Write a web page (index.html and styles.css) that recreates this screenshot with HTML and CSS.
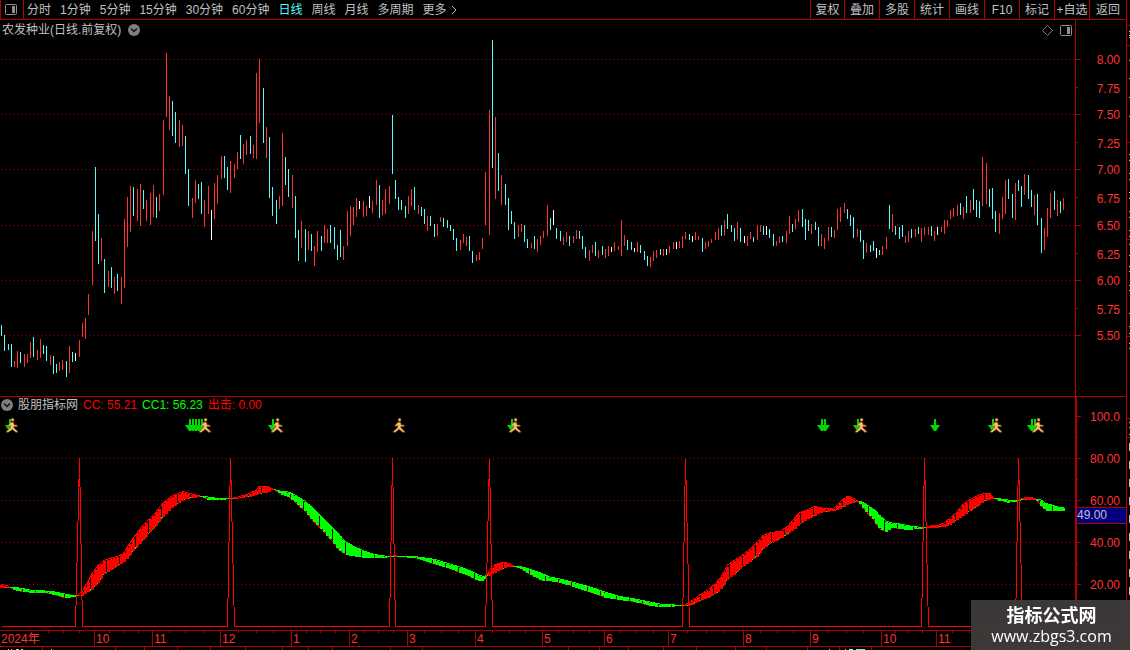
FILE: index.html
```html
<!DOCTYPE html>
<html lang="zh-CN">
    <head>
        <meta charset="UTF-8">
        <meta name="viewport" content="width=device-width, initial-scale=1.0">
        <title>农发种业 日线</title>
        <link rel="stylesheet" href="styles.css">
    </head>
    <body>

    <svg class="symbols" width="0" height="0">
        <symbol id="chevron" viewBox="0 0 12 12">
            <circle cx="6" cy="6" r="6" fill="#808080"/>
            <path d="M3 4.5L6 7.5L9 4.5" fill="none" stroke="#111" stroke-width="1.5"/>
        </symbol>
        <symbol id="layout" viewBox="0 0 12 11">
            <rect x="0.5" y="0.5" width="11" height="10" rx="1" fill="none" stroke="#909090"/>
            <rect x="7" y="2" width="3" height="7" fill="#909090"/>
        </symbol>
        <symbol id="runner" viewBox="-1 -1 14 17">
            <g fill="#ffc46a" stroke="#8a4a18" stroke-width="0.6">
                <path d="M5 4.2H7.6L8 6.8L11.2 7.2V8.4L7.8 8.4L8 10L11.6 13.2V14.2H9.8L6.2 11.2L2.4 14.2H0.4V13.2L4.4 10L4.8 7.4L3 8.4L1.8 7.8Z"/>
                <circle cx="6.6" cy="1.8" r="1.5"/>
            </g>
        </symbol>
        <symbol id="arrow" viewBox="0 0 10 12">
            <path d="M4 0H6V6H10L6 12H4L0 6H4Z" fill="#00d800"/>
        </symbol>
    </svg>

    <div class="terminal">
        <main class="workspace">
            <header class="toolbar">
                <button class="layout-button" aria-label="布局"><svg width="12" height="11"><use href="#layout"/></svg></button>
                <nav class="periods">
                    <button>分时</button>
                    <button>1分钟</button>
                    <button>5分钟</button>
                    <button>15分钟</button>
                    <button>30分钟</button>
                    <button>60分钟</button>
                    <button class="current">日线</button>
                    <button>周线</button>
                    <button>月线</button>
                    <button>多周期</button>
                    <button class="more">更多<svg width="6" height="10"><path d="M1 1L5 5L1 9" fill="none" stroke="#c0c0c0"/></svg></button>
                </nav>
                <div class="tools">
                    <button>复权</button>
                    <button>叠加</button>
                    <button>多股</button>
                    <button>统计</button>
                    <button>画线</button>
                    <button>F10</button>
                    <button>标记</button>
                    <button>+自选</button>
                    <button>返回</button>
                </div>
            </header>

            <section class="panel price-panel">
                <div class="plot">
                    <div class="price-title">
                        <h1>农发种业(日线.前复权)</h1>
                        <button aria-label="展开"><svg width="12" height="12"><use href="#chevron"/></svg></button>
                        <div class="corner">
                            <svg width="11" height="11"><path d="M5.5 0.5L10.5 5.5L5.5 10.5L0.5 5.5Z" fill="none" stroke="#808080"/></svg>
                            <svg width="12" height="11"><use href="#layout"/></svg>
                        </div>
                    </div>
                    <svg id="price-chart" class="chart" viewBox="0 40 1075 356" preserveAspectRatio="none"></svg>
                </div>
                <svg id="price-axis" class="axis" viewBox="1075 20 51 376"></svg>
            </section>

            <section class="panel indicator-panel">
                <div class="plot">
                    <div class="indicator-title">
                        <button aria-label="展开"><svg width="12" height="12"><use href="#chevron"/></svg></button>
                        <h2>股朋指标网</h2>
                        <span class="red">CC: 55.21</span>
                        <span class="green">CC1: 56.23</span>
                        <span class="red">出击: 0.00</span>
                    </div>
                    <svg id="indicator-chart" class="chart" viewBox="0 413 1075 217" preserveAspectRatio="none"></svg>
                </div>
                <svg id="indicator-axis" class="axis" viewBox="1075 397 51 233"></svg>
            </section>

            <footer class="time-axis">
                <svg id="time-ticks" viewBox="0 631 1126 3" preserveAspectRatio="none"></svg>
                <div class="months" id="months"></div>
            </footer>
            <svg id="next-row" class="next-row" viewBox="0 647 1126 3" preserveAspectRatio="none"></svg>
        </main>
        <svg id="side" class="side" viewBox="1127 0 3 650"></svg>
    </div>

    <aside class="watermark">
        <strong>指标公式网</strong>
        <a href="#">www.zbgs3.com</a>
    </aside>

    <script src="script.js"></script>
    </body>
</html>
```
FILE: styles.css
```css
* {
    box-sizing: border-box;
    margin: 0;
    padding: 0;
}
body {
    background-color: #000;
    color: #c0c0c0;
    font-family: "Liberation Sans", "Noto Sans CJK SC", sans-serif;
    font-size: 12px;
    line-height: 16px;
    overflow: hidden;
}
svg {
    display: block;
}
button {
    background: none;
    border: 0;
    color: inherit;
    font: inherit;
    white-space: nowrap;
    cursor: pointer;
}
.symbols {
    position: absolute;
}
.terminal {
    display: flex;
    min-height: 100vh;
}
.workspace {
    flex: 1;
    min-width: 0;
    border-right: 1px solid #b00000;
}
.side {
    width: 3px;
    height: 650px;
}

/* toolbar */
.toolbar {
    display: flex;
    height: 20px;
    border-bottom: 1px solid #b00000;
}
.layout-button {
    width: 24px;
    padding-left: 4px;
    border-left: 1px solid #b00000;
    border-right: 1px solid #b00000;
}
.periods {
    display: flex;
    gap: 9px;
    padding-left: 3px;
}
.periods .current {
    color: #54fcfc;
}
.periods .more {
    display: flex;
    align-items: center;
    gap: 4px;
}
.tools {
    display: flex;
    margin-left: auto;
}
.tools button {
    width: 35px;
    border-left: 1px solid #b00000;
}
.tools button:first-child {
    width: 34px;
}
.tools button:last-child {
    width: 37px;
}

/* panels */
.panel {
    display: flex;
}
.plot {
    flex: 1;
    min-width: 0;
}
.chart {
    width: 100%;
}
.axis {
    width: 51px;
    flex: none;
}
.axis text {
    fill: #ff3232;
    text-anchor: end;
}
.axis .cursor-value {
    fill: #c0c0c0;
    text-anchor: start;
}
#price-chart {
    height: 356px;
}
#price-axis {
    height: 376px;
}
#indicator-chart {
    height: 217px;
}
#indicator-axis {
    height: 233px;
}
.price-title {
    display: flex;
    align-items: center;
    gap: 7px;
    height: 20px;
    padding-left: 2px;
    padding-right: 3px;
}
.price-title h1, .indicator-title h2 {
    font-size: 12px;
    font-weight: normal;
}
.corner {
    display: flex;
    gap: 7px;
    margin-left: auto;
}
.indicator-panel {
    border-top: 1px solid #b00000;
}
.indicator-title {
    display: flex;
    align-items: center;
    gap: 5px;
    height: 16px;
    padding-left: 1px;
}
.red {
    color: #ff0000;
}
.green {
    color: #00ff00;
}

/* svg marks */
.grid {
    stroke: #a00000;
    stroke-dasharray: 1 3;
    shape-rendering: crispEdges;
}
.line {
    fill: none;
    shape-rendering: crispEdges;
}
.bar {
    shape-rendering: crispEdges;
}

/* time axis */
.time-axis {
    border-top: 1px solid #b00000;
    border-bottom: 1px solid #b00000;
}
.time-axis svg {
    width: 100%;
    height: 3px;
}
.months {
    display: grid;
    height: 12px;
    line-height: 10px;
    color: #ff3232;
}
.months span {
    padding-left: 1px;
    border-left: 1px solid #b00000;
    white-space: nowrap;
}
.months span:first-child {
    border-left: 0;
}
.next-row {
    width: 100%;
    height: 3px;
}

.watermark {
    position: fixed;
    right: 0;
    bottom: 0;
    display: flex;
    flex-direction: column;
    align-items: center;
    width: 159px;
    height: 50px;
    padding-top: 6px;
    padding-left: 2px;
    background-color: rgba(62, 58, 58, 0.96);
    color: #fff;
    font-size: 18px;
    line-height: 20px;
}
.watermark a {
    color: #fff;
    font-family: "Open Sans", sans-serif;
    font-size: 16px;
    text-decoration: none;
}
```
FILE: script.js
```js
var NS = 'http://www.w3.org/2000/svg';
var colors = { r: '#ff3232', c: '#54fcfc', w: '#ffffff' };

// x, high, low, color
var candles = `1 325 336 c,4 335 351 c,8 344 350 c,11 344 367 c,14 361 367 r,17 351 368 r,20 352 363 c,24 354 367 r,27 354 363 r,30 342 358 r,
33 337 357 c,37 350 360 r,40 339 358 r,43 345 354 c,46 346 361 c,50 355 365 r,53 356 374 c,56 364 373 c,59 362 371 r,62 360 370 r,
66 361 377 c,69 346 373 r,72 352 362 c,75 353 361 w,79 340 357 r,82 323 337 r,85 318 339 r,88 294 315 r,92 231 285 r,95 167 241 c,
98 214 264 c,101 238 261 r,104 259 293 c,108 271 287 r,111 267 288 c,114 277 294 r,117 274 291 c,121 277 304 r,124 219 288 r,127 197 247 r,
130 186 232 r,133 187 216 c,137 189 221 r,140 184 226 r,143 190 209 c,146 200 221 r,150 193 225 r,153 185 217 r,156 197 218 c,159 194 211 r,
163 120 195 r,166 53 117 r,169 96 130 r,172 101 136 c,175 112 143 c,179 120 147 r,182 125 146 r,185 136 174 c,188 169 206 c,192 198 218 r,
195 180 203 r,198 184 199 c,201 182 214 c,204 200 227 r,208 186 214 r,211 210 240 w,214 183 219 r,217 175 204 r,221 156 179 r,224 156 178 c,
227 167 190 c,230 161 193 r,234 164 178 r,237 152 169 r,240 135 159 c,243 144 164 r,246 140 155 r,250 136 154 c,253 145 158 r,256 73 159 r,
259 59 123 r,263 88 143 c,266 127 158 r,269 137 198 c,272 187 216 c,276 200 224 c,279 196 209 r,282 133 206 r,285 157 185 c,288 169 197 c,
292 175 208 r,295 196 238 c,298 230 261 c,301 221 248 r,305 229 262 c,308 231 250 r,311 234 251 c,314 246 266 r,317 231 252 r,321 236 251 c,
324 225 243 r,327 229 243 r,330 225 243 c,334 227 249 c,337 245 260 c,340 230 257 c,343 246 260 r,347 211 246 r,350 206 236 r,353 207 225 r,
356 198 217 r,359 201 209 w,363 201 217 r,366 206 216 r,369 196 208 w,372 201 213 r,376 180 205 r,379 185 218 c,382 200 215 r,385 189 214 r,
389 186 204 r,392 115 174 c,395 180 199 c,398 197 210 c,401 200 210 c,405 206 218 c,408 196 214 r,411 189 206 r,414 187 210 c,418 205 214 r,
421 207 216 c,424 209 224 c,427 216 231 r,430 216 226 c,434 224 237 c,437 224 236 r,440 217 222 r,443 218 227 c,447 220 228 c,450 225 231 c,
453 229 240 c,456 238 251 c,460 240 250 r,463 234 243 r,466 237 246 r,469 236 251 c,472 251 263 c,476 255 261 r,479 252 260 r,482 238 249 r,
485 172 225 r,489 110 235 r,492 40 168 c,495 117 199 r,498 153 191 c,501 175 205 r,505 184 205 c,508 198 230 c,511 211 224 c,514 222 239 c,
518 225 237 r,521 224 232 r,524 225 242 c,527 239 248 c,531 243 248 r,534 236 249 c,537 239 252 r,540 236 245 r,543 231 238 r,547 205 236 r,
550 218 230 c,553 210 225 w,556 228 239 c,560 231 241 c,563 237 245 r,566 232 242 r,569 236 246 c,573 236 243 r,576 230 239 r,579 231 239 c,
582 236 249 c,585 247 258 c,589 250 261 r,592 245 253 r,595 242 256 c,598 250 258 r,602 246 255 c,605 249 258 r,608 246 256 r,611 247 252 w,
614 242 251 r,618 246 250 r,621 220 256 r,624 235 246 r,627 240 250 c,631 242 250 c,634 248 252 w,637 242 252 r,640 245 253 c,644 251 260 c,
647 256 266 c,650 257 267 r,653 251 261 r,656 250 258 r,660 249 255 c,663 249 256 r,666 249 255 w,669 246 253 r,673 242 249 r,676 242 249 w,
679 241 248 r,682 236 248 r,685 232 239 r,689 234 240 c,692 236 242 w,695 232 240 r,698 236 240 r,702 238 252 c,705 242 249 r,708 241 247 r,
711 239 243 r,715 232 240 r,718 228 240 r,721 225 236 c,724 220 235 r,727 214 229 c,731 225 232 c,734 228 241 c,737 222 239 r,740 228 242 c,
744 236 243 w,747 236 246 r,750 232 239 r,753 237 242 c,757 225 240 r,760 225 232 r,763 226 235 c,766 226 235 w,769 229 238 c,773 234 246 c,
776 241 246 r,779 237 243 r,782 236 242 c,786 231 243 r,789 216 234 r,792 224 232 c,795 219 229 r,798 210 222 r,802 209 227 c,805 219 240 c,
808 220 231 c,811 224 234 r,815 222 230 c,818 227 246 c,821 234 246 r,824 238 249 r,828 227 241 r,831 227 237 c,834 230 238 r,837 209 230 r,
840 207 222 r,844 203 213 r,847 209 219 c,850 215 226 c,853 217 238 c,857 229 237 r,860 230 242 c,863 240 259 c,866 243 253 r,870 245 252 c,
873 241 251 c,876 248 258 w,879 250 255 c,882 246 255 r,886 237 249 r,889 205 229 c,892 214 232 r,895 226 235 c,899 227 239 c,902 225 237 c,
905 236 243 r,908 231 242 r,911 229 238 c,915 229 237 r,918 227 234 c,921 228 242 r,924 227 235 r,928 227 235 r,931 226 236 c,934 231 241 r,
937 227 235 w,941 227 232 r,944 220 234 r,947 220 227 r,950 210 219 r,953 208 217 r,957 205 216 r,960 203 215 c,963 207 219 r,966 196 213 c,
970 200 213 r,973 189 210 c,976 200 217 c,979 201 218 c,982 157 206 r,986 163 204 r,989 189 207 c,992 188 219 c,995 211 232 c,999 213 234 r,
1002 197 219 r,1005 180 214 r,1008 179 199 c,1012 194 218 c,1015 183 220 r,1018 180 191 c,1021 186 207 c,1024 174 195 r,1028 175 199 c,1031 190 207 c,
1034 195 215 r,1037 194 225 c,1041 218 253 c,1044 228 250 r,1047 208 237 r,1050 193 218 r,1054 191 210 c,1057 200 216 r,1060 201 213 c,1063 198 210 r`
    .split(',').map(function(row) {
        var p = row.trim().split(' ');
        return { x: +p[0], high: +p[1], low: +p[2], color: colors[p[3]] };
    });

// x, CC, CC1
var curve = [
    [1, 585, 587.5], [7, 586, 588], [10, 588, 588], [15, 590, 588], [22, 592, 589], [30, 592.5, 590.5], [45, 593, 591.5],
    [55, 595, 592.5], [65, 598.5, 594.5], [73, 597, 596], [77, 596.5, 596.5], [82, 592, 595.5], [88, 582, 592], [92, 574, 589.5],
    [98, 566, 583], [104, 561, 574], [108, 559.5, 572], [115, 557.5, 567.5], [123, 554.5, 562.5], [128, 546.5, 558], [134, 537.5, 550],
    [142, 526.5, 541.5], [148, 520.5, 534.5], [155, 513.5, 527], [162, 505, 518], [170, 497.5, 509.5], [178, 494, 503.5], [183, 492, 500],
    [188, 493.5, 498.5], [196, 495.5, 497.5], [202, 497, 497], [208, 499.5, 497.5], [215, 500.5, 498.5], [222, 500, 499], [230, 499, 499],
    [238, 497.5, 498.7], [248, 494.5, 497], [256, 491, 495], [259, 487, 494], [266, 486.5, 493], [271, 488.5, 490.5], [274, 490, 490],
    [280, 494, 491.5], [288, 496.5, 492.5], [294, 501.5, 495], [299, 506, 498], [305, 511, 501.5], [313, 521, 509], [320, 528, 516],
    [330, 539, 526], [338, 549, 534], [345, 554.5, 542], [355, 556.5, 547.5], [365, 558, 552], [375, 558, 555], [385, 558, 556.5],
    [391, 557, 557], [395, 556, 557], [398, 557, 557], [415, 558, 557], [425, 561, 558.5], [435, 564.5, 560], [445, 567, 563],
    [455, 571, 566], [465, 574.5, 569], [475, 579, 573.5], [480, 581.5, 576], [484, 580, 577], [487, 576, 576], [490, 569.5, 575.5],
    [495, 565, 572.5], [500, 563.5, 570], [505, 563, 568], [511, 564.5, 566.5], [514, 567, 567], [520, 568.5, 567], [526, 572, 568.5],
    [533, 576, 571], [542, 580.5, 574], [550, 581, 577.5], [560, 583, 579.5], [570, 585.5, 582], [583, 590, 585.5], [595, 594, 589],
    [605, 597.5, 592.5], [620, 600, 597], [635, 602, 599.5], [650, 606, 602.5], [660, 607, 604.5], [675, 606.5, 605.5], [684, 606, 606],
    [690, 602.5, 605.5], [696, 598.5, 603], [700, 595, 601], [708, 590.5, 598], [717, 582.5, 593], [722, 576, 587.5], [728, 565, 579],
    [735, 560.5, 574], [742, 556, 567.5], [750, 550, 561.5], [757, 543, 556.5], [763, 536, 549], [770, 533, 543.5], [780, 532, 539],
    [788, 526.5, 534], [795, 518, 528.5], [800, 513, 524], [808, 510, 519], [815, 506.5, 515.5], [820, 508, 513], [826, 509.5, 512],
    [834, 508.5, 511], [840, 502.5, 508.5], [846, 497.5, 505.5], [850, 497, 503.5], [855, 499.5, 502], [858, 502, 502], [862, 506.5, 502.5],
    [868, 514, 506], [874, 520.5, 510], [880, 529.5, 516.5], [886, 532, 521.5], [892, 528, 523.5], [900, 529, 524.5], [910, 530, 526.5],
    [918, 529, 527.5], [924, 528, 528], [930, 526.5, 527.5], [938, 526, 527.5], [944, 523.5, 526.5], [950, 518.5, 525], [956, 513.5, 520.5],
    [962, 506, 516.5], [970, 500, 511], [978, 496, 506], [984, 494, 501], [990, 494, 499.5], [993, 498.5, 498.5], [1000, 501, 499.3],
    [1008, 502.5, 500.5], [1015, 502, 501], [1018, 501, 501], [1026, 497.5, 499.5], [1032, 498, 499.5], [1036, 499.5, 499.5],
    [1041, 506, 500.5], [1046, 510.5, 504], [1052, 510.5, 505.5], [1058, 510.5, 507.5], [1064, 510.5, 508]
];

function add(parent, name, attrs, text) {
    var el = document.createElementNS(NS, name);
    for (var key in attrs) {
        el.setAttribute(key, attrs[key]);
    }
    if (text) {
        el.textContent = text;
    }
    parent.appendChild(el);
    return el;
}

function rect(parent, x, y, width, height, fill) {
    add(parent, 'rect', { class: 'bar', x: x, y: y, width: width, height: height, fill: fill });
}

function grid(parent, rows) {
    rows.forEach(function(y) {
        add(parent, 'line', { class: 'grid', x1: 1, x2: 1075, y1: y + 0.5, y2: y + 0.5 });
    });
}

// price chart
var price = document.getElementById('price-chart');
grid(price, [59, 114, 169, 225, 280, 335]);
candles.forEach(function(c) {
    rect(price, c.x, c.high, 1, c.low - c.high, c.color);
});

var priceAxis = document.getElementById('price-axis');
rect(priceAxis, 1075, 20, 1, 376, '#b00000');
[[59, 59], [87, 88], [114, 114], [142, 143], [169, 169], [197, 198], [225, 225], [253, 254], [280, 280], [308, 309], [335, 335]].forEach(function(row, i) {
    rect(priceAxis, 1076, row[0], i % 2 ? 2 : 5, 1, '#b00000');
    add(priceAxis, 'text', { x: 1120, y: row[1] + 5 }, (8 - i * 0.25).toFixed(2));
});

// indicator chart
function valueAt(x, column) {
    for (var i = 1; i < curve.length; i++) {
        if (x <= curve[i][0]) {
            var a = curve[i - 1];
            var b = curve[i];
            return a[column] + (b[column] - a[column]) * (x - a[0]) / (b[0] - a[0]);
        }
    }
    return curve[curve.length - 1][column];
}

function points(column) {
    return curve.map(function(p) { return p[0] + ',' + (p[column] - 0.5); }).join(' ');
}

var indicator = document.getElementById('indicator-chart');
grid(indicator, [458, 500, 542, 584]);
add(indicator, 'polyline', { class: 'line', points: points(1), stroke: '#ff0000' });
add(indicator, 'polyline', { class: 'line', points: points(2), stroke: '#00ff00' });
candles.forEach(function(c) {
    var cc = Math.round(valueAt(c.x, 1));
    var cc1 = Math.round(valueAt(c.x, 2));
    if (cc !== cc1) {
        rect(indicator, c.x - 1, Math.min(cc, cc1), 3, Math.abs(cc - cc1), cc < cc1 ? '#ff0000' : '#00ff00');
    }
});

// 出击 signal: left foot, peak, right foot
var spikes = [[75, 79, 82], [227, 230, 234], [389, 392, 395], [485, 489, 492], [682, 685, 689], [921, 924, 928], [1015, 1018, 1022]];
var signal = '1.5,626.5';
spikes.forEach(function(s) {
    signal += ' ' + (s[0] + 0.5) + ',626.5 ' + (s[1] + 0.5) + ',458 ' + (s[2] + 0.5) + ',626.5';
});
add(indicator, 'polyline', { class: 'line', points: signal + ' 1065,626.5', stroke: '#ff0000' });

[10, 190, 193, 196, 199, 202, 273, 512, 822, 825, 858, 935, 993, 1032, 1035].forEach(function(x) {
    add(indicator, 'use', { href: '#arrow', x: x - 5, y: 419, width: 10, height: 12 });
});
[6, 199, 271, 393, 509, 855, 990, 1032].forEach(function(x) {
    add(indicator, 'use', { href: '#runner', x: x - 1, y: 417, width: 14, height: 17 });
});

var indicatorAxis = document.getElementById('indicator-axis');
rect(indicatorAxis, 1075, 397, 2, 233, '#b00000');
['100.0', '80.00', '60.00', '40.00', '20.00'].forEach(function(label, i) {
    rect(indicatorAxis, 1077, 416 + i * 42, 4, 1, '#b00000');
    rect(indicatorAxis, 1077, 437 + i * 42, 1, 1, '#b00000');
    add(indicatorAxis, 'text', { x: 1120, y: 421 + i * 42 }, label);
});
rect(indicatorAxis, 1077, 507, 49, 17, '#b00000');
rect(indicatorAxis, 1077, 508, 49, 15, '#000080');
add(indicatorAxis, 'text', { class: 'cursor-value', x: 1077, y: 519 }, '49.00');

// time axis
var starts = [0, 94, 152, 220, 291, 349, 407, 475, 542, 604, 668, 743, 810, 881, 936, 1126];
var names = ['2024年', '10', '11', '12', '1', '2', '3', '4', '5', '6', '7', '8', '9', '10', '11'];
var ticks = document.getElementById('time-ticks');
var months = document.getElementById('months');
months.style.gridTemplateColumns = names.map(function(name, i) {
    return 'minmax(0, ' + (starts[i + 1] - starts[i]) + 'fr)';
}).join(' ');
names.forEach(function(name, i) {
    var cell = document.createElement('span');
    cell.textContent = name;
    months.appendChild(cell);
    if (i > 0) {
        rect(ticks, starts[i], 631, 1, 3, '#b00000');
    }
});
[48, 63, 79, 109, 123, 138, 169, 185, 203, 238, 256, 273, 306, 320, 335, 364, 378, 393, 424, 441, 458, 492, 509, 525, 558, 573, 589,
 620, 636, 653, 687, 706, 724, 760, 777, 793, 828, 846, 863, 895, 908, 922, 952, 969].forEach(function(x) {
    rect(ticks, x, 631, 1, 2, '#b00000');
});

// top edge of the row below
var nextRow = document.getElementById('next-row');
[42, 115, 144, 177, 210, 245, 282, 308, 332, 390, 422, 568, 599, 628, 663, 696, 735, 766, 807, 839, 871].forEach(function(x) {
    rect(nextRow, x, 647, 1, 3, '#b00000');
});
[[8, 1], [11, 1], [16, 3], [21, 2], [51, 1], [829, 1], [845, 1]].forEach(function(p) {
    rect(nextRow, p[0], 649, p[1], 1, '#c0c0c0');
});
rect(nextRow, 849, 649, 4, 1, '#54fcfc');
rect(nextRow, 856, 649, 9, 1, '#54fcfc');

// left edge of the side pane
var side = document.getElementById('side');
[25, 45, 142, 239, 336, 418, 437].forEach(function(y) {
    rect(side, 1127, y, 3, 1, '#b00000');
});
[31, 35, 37, 60, 78, 97, 116, 154, 160, 173, 179, 192, 198, 211, 217, 230, 236, 244, 255, 266, 271, 285, 290, 313, 326, 333, 343, 348, 422, 427, 434].forEach(function(y) {
    rect(side, 1129, y, 1, 1, '#c0c0c0');
});
for (var y = 443; y < 600; y += 18) {
    rect(side, 1129, y, 1, 8, '#c0c0c0');
}
```
